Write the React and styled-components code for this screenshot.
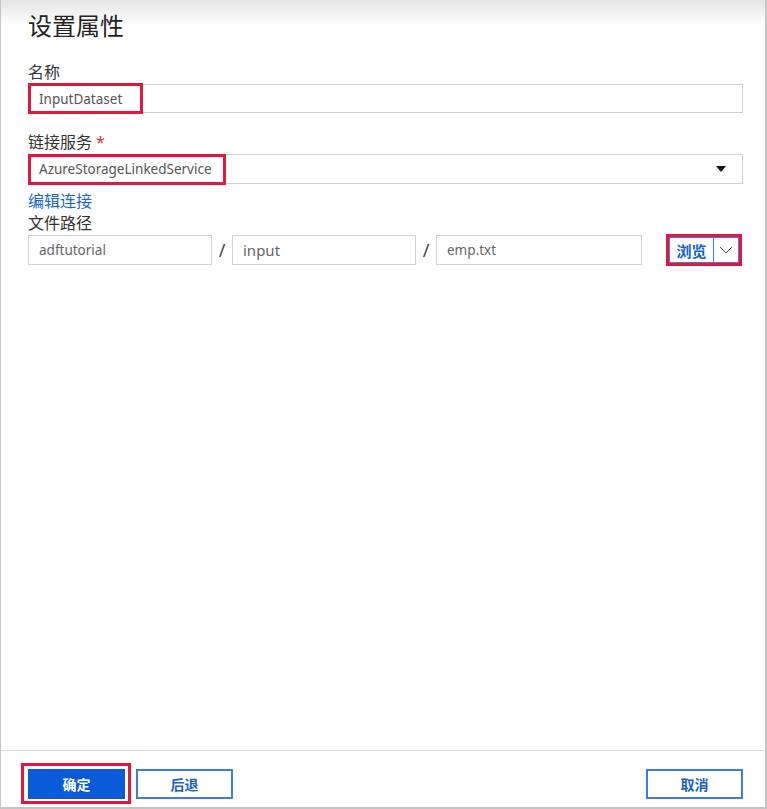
import React from "react";
import styled, { createGlobalStyle } from "styled-components";

const GlobalStyle = createGlobalStyle`
  html, body {
    margin: 0;
    padding: 0;
    background: #fff;
  }
  body {
    font-family: "Segoe UI", "Noto Sans", "Noto Sans CJK SC", sans-serif;
  }
`;

const Panel = styled.div`
  box-sizing: border-box;
  width: 767px;
  height: 809px;
  display: flex;
  flex-direction: column;
  border-left: 1px solid #c4c4c4;
  border-right: 2px solid #c4c4c4;
  border-bottom: 2px solid #c4c4c4;
  background: linear-gradient(to bottom, #e4e4e4 0px, #ffffff 26px, #ffffff 100%);
`;

const Body = styled.div`
  flex: 1;
  padding: 7px 22px 0 27px;
`;

const Title = styled.h1`
  margin: 0;
  font-size: 24px;
  line-height: 38px;
  font-weight: 400;
  color: #222;
`;

const Label = styled.div`
  font-size: 16px;
  line-height: 22px;
  color: #333;
  margin-top: ${(p) => p.$top || 0}px;

  span {
    color: #d0323c;
    margin-left: 4px;
  }
`;

const Field = styled.div`
  position: relative;
  box-sizing: border-box;
  height: ${(p) => p.$h || 29}px;
  margin-top: 1px;
  border: 1px solid #cfcfcf;
  background: #fff;
  display: flex;
  align-items: center;
  padding-left: 10px;
  font-size: 13.5px;
  color: #555;
`;

const Caret = styled.div`
  margin-left: auto;
  margin-right: 16px;
  width: 0;
  height: 0;
  border-left: 5px solid transparent;
  border-right: 5px solid transparent;
  border-top: 6px solid #111;
`;

const Mark = styled.div`
  position: absolute;
  left: ${(p) => p.$l}px;
  top: ${(p) => p.$t}px;
  width: ${(p) => p.$w}px;
  height: ${(p) => p.$h}px;
  border: 3px solid #e3173e;
  box-sizing: border-box;
  pointer-events: none;
`;

const Link = styled.div`
  margin-top: 6px;
  font-size: 16px;
  line-height: 22px;
  color: #1a66d2;
`;

const PathRow = styled.div`
  display: flex;
  align-items: flex-end;
  height: 31px;
`;

const PathBox = styled.div`
  box-sizing: border-box;
  width: ${(p) => p.$w}px;
  height: 30px;
  border: 1px solid #d2d2d2;
  display: flex;
  align-items: center;
  padding-left: 10px;
  font-size: ${(p) => p.$fs || 13.5}px;
  color: #666;
`;

const Slash = styled.div`
  width: 20px;
  align-self: center;
  text-align: center;
  font-size: 18px;
  color: #444;
`;

const BrowseWrap = styled.div`
  margin-left: 24px;
  box-sizing: border-box;
  width: 76px;
  height: 32px;
  margin-bottom: -1px;
  border: 3px solid #e3173e;
  display: flex;
`;

const BrowseBtn = styled.div`
  flex: 1;
  display: flex;
  align-items: center;
  justify-content: center;
  font-size: 15px;
  font-weight: 700;
  color: #0f5fd6;
  border: 1px solid #3a7fe0;
  border-right: none;
`;

const ChevronBtn = styled.div`
  width: 24px;
  display: flex;
  align-items: center;
  justify-content: center;
  border: 1px solid #3a7fe0;
`;

const Footer = styled.div`
  box-sizing: border-box;
  border-top: 1px solid #dcdcdc;
  height: 57px;
  display: flex;
  align-items: flex-start;
  padding: 18px 22px 0 27px;
  gap: 11px;
`;

const ButtonWrap = styled.div`
  position: relative;
`;

const Button = styled.button`
  box-sizing: border-box;
  width: 97px;
  height: 30px;
  margin: 0;
  padding: 0;
  font-family: inherit;
  font-size: 14px;
  font-weight: 700;
  border: 2px solid ${(p) => (p.$primary ? "#0a5bd7" : "#3a7fe0")};
  background: ${(p) => (p.$primary ? "#0a5bd7" : "#fff")};
  color: ${(p) => (p.$primary ? "#fff" : "#1a5fc4")};
  margin-left: ${(p) => (p.$push ? "auto" : "0")};
`;

export default function App() {
  return (
    <>
      <GlobalStyle />
      <Panel>
        <Body>
          <Title>设置属性</Title>
          <Label $top={16}>名称</Label>
          <Field>
            InputDataset
            <Mark $l={-1} $t={-2} $w={115} $h={31} />
          </Field>
          <Label $top={18}>
            链接服务<span>*</span>
          </Label>
          <Field $h={30}>
            AzureStorageLinkedService
            <Caret />
            <Mark $l={-1} $t={-1} $w={198} $h={31} />
          </Field>
          <Link>编辑连接</Link>
          <Label>文件路径</Label>
          <PathRow>
            <PathBox $w={184}>adftutorial</PathBox>
            <Slash>/</Slash>
            <PathBox $w={184} $fs={15}>input</PathBox>
            <Slash>/</Slash>
            <PathBox $w={206}>emp.txt</PathBox>
            <BrowseWrap>
              <BrowseBtn>浏览</BrowseBtn>
              <ChevronBtn>
                <svg width="14" height="8" viewBox="0 0 14 8">
                  <path d="M1 1 L7 7 L13 1" fill="none" stroke="#444" strokeWidth="1" />
                </svg>
              </ChevronBtn>
            </BrowseWrap>
          </PathRow>
        </Body>
        <Footer>
          <ButtonWrap>
            <Button $primary>确定</Button>
            <Mark $l={-7} $t={-6} $w={110} $h={41} />
          </ButtonWrap>
          <Button>后退</Button>
          <Button $push>取消</Button>
        </Footer>
      </Panel>
    </>
  );
}
